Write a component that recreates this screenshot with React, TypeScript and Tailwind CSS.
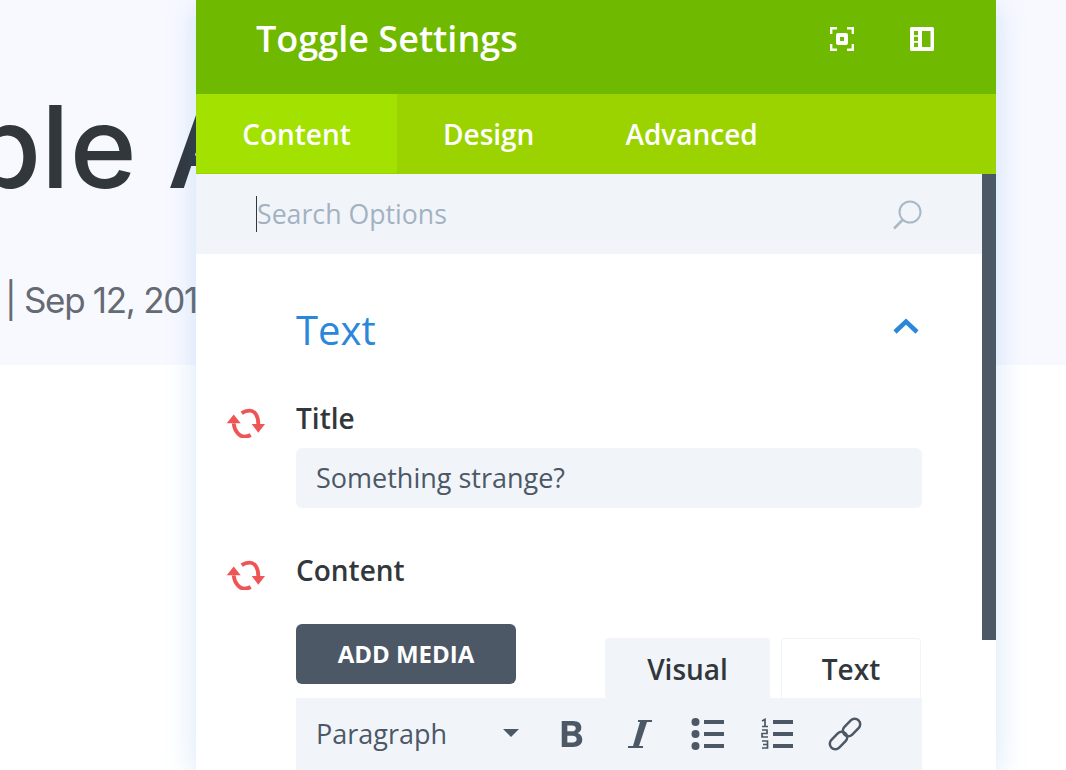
import React from "react";

const Sync = () => (
  <svg width="40" height="30" viewBox="0 0 40 30" fill="none" className="shrink-0">
    <path d="M7.7 15.3C8.5 24 14 28.7 18.3 28.7C20.5 28.7 23 28 24.7 27" stroke="#ef5555" strokeWidth="3.8" />
    <path d="M15.7 5.3C18 3.5 21 2.7 24 2.7C28 2.7 32.3 7 32.3 16" stroke="#ef5555" strokeWidth="3.8" />
    <path d="M0.7 15.3H14.7L7.7 6.5Z" fill="#ef5555" />
    <path d="M25.7 16H39L32.3 24.7Z" fill="#ef5555" />
  </svg>
);

export default function App() {
  return (
    <div className="relative h-[770px] w-full overflow-hidden bg-white font-['Open_Sans',sans-serif]">
      <div className="h-[365px] overflow-hidden bg-[#f8f9ff] pt-[82px] font-['Inter',sans-serif]">
        <div className="ml-[-269px] whitespace-nowrap text-[114px] font-medium leading-[130px] text-[#32373c]">Sample Article</div>
        <div className="ml-[5px] mt-[66px] whitespace-nowrap text-[35px] leading-[44px] tracking-[-1.3px] text-[#666a72]">| Sep 12, 2018</div>
      </div>

      <div className="absolute left-[196px] top-0 h-[770px] w-[800px] bg-white shadow-[0_5px_30px_rgba(43,135,218,0.2)]">
        <div className="flex h-[94px] items-center justify-between bg-[#6fb900] pb-[16px] pl-[60px] pr-[62px]">
          <div className="text-[36px] font-semibold text-white">Toggle Settings</div>
          <div className="flex items-center gap-[56px]">
            <svg width="24" height="24" viewBox="0 0 24 24" fill="none">
              <path d="M1.2 7V1.200H7M17 1.200H22.800V7M22.800 17V22.800H17M7 22.800H1.200V17" stroke="#fff" strokeWidth="2.400" />
              <rect x="6" y="6" width="12" height="12" rx="2" fill="#fff" />
              <rect x="10" y="10" width="4" height="4" fill="#6fb900" />
            </svg>
            <svg width="24" height="24" viewBox="0 0 24 24">
              <path fillRule="evenodd" clipRule="evenodd" d="M1.5 0H22.5A1.5 1.5 0 0 1 24 1.5V22.5A1.5 1.5 0 0 1 22.5 24H1.5A1.5 1.5 0 0 1 0 22.5V1.5A1.5 1.5 0 0 1 1.5 0ZM12 4V20H20.500V4ZM4 4V8.300H8V4ZM4 9.800V14H8V9.800ZM4 15.700V20H8V15.700Z" fill="#fff" />
            </svg>
          </div>
        </div>

        <div className="flex h-[80px] items-center bg-[#9bd300] pb-[1px] text-[28px] font-semibold text-white">
          <div className="flex h-full w-[201px] items-center justify-center bg-[#a2e100]">Content</div>
          <div className="ml-[46px]">Design</div>
          <div className="ml-[91px]">Advanced</div>
        </div>

        <div className="flex h-[80px] items-center justify-between bg-[#f1f5f9] pl-[60px] pr-[74px]">
          <div className="border-l border-[#32373c] text-[26.7px] leading-[36px] text-[#a3b2c2]">Search Options</div>
          <svg width="30" height="30" viewBox="0 0 30 30" fill="none" className="mt-[2px]">
            <circle cx="18" cy="12" r="10.500" stroke="#a9b8c6" strokeWidth="2" />
            <path d="M10.500 20L2 28.500" stroke="#a9b8c6" strokeWidth="2.500" />
          </svg>
        </div>

        <div className="pl-[30px] pr-[74px]">
          <div className="flex h-[146px] items-start justify-between pl-[70px]">
            <div className="pt-[52px] text-[40px] leading-[48px] text-[#2b87da]">Text</div>
            <svg width="26" height="16" viewBox="0 0 26 16" fill="none" className="mt-[64px] mr-[3px]">
              <path d="M2 14L13 3.500L24 14" stroke="#2b87da" strokeWidth="4.500" />
            </svg>
          </div>

          <div className="flex">
            <div className="w-[70px] pt-[8px]"><Sync /></div>
            <div className="flex-1">
              <div className="text-[28px] font-semibold leading-[36px] text-[#32373c]">Title</div>
              <div className="mt-[12px] flex h-[60px] items-center rounded-[6px] bg-[#f1f5f9] px-[20px] pt-[1px] text-[27px] text-[#4c5866]">Something strange?</div>
            </div>
          </div>

          <div className="mt-[44px] flex">
            <div className="w-[70px] pt-[8px]"><Sync /></div>
            <div className="flex-1">
              <div className="text-[28px] font-semibold leading-[36px] text-[#32373c]">Content</div>
              <div className="mt-[36px] flex items-end justify-between">
                <div className="mb-[14px] flex h-[60px] w-[220px] items-center justify-center rounded-[6px] bg-[#4c5866] text-[24px] font-bold text-white">ADD MEDIA</div>
                <div className="flex gap-[11px] pr-[1px]">
                  <div className="flex h-[60px] w-[165px] items-center justify-center rounded-t-[4px] bg-[#f1f5f9] pt-[2px] text-[28px] font-semibold text-[#32373c]">Visual</div>
                  <div className="flex h-[60px] w-[140px] items-center justify-center rounded-t-[4px] border-x border-t border-[#f1f5f9] pt-[1px] text-[28px] font-semibold text-[#32373c]">Text</div>
                </div>
              </div>
              <div className="flex h-[72px] items-center bg-[#f1f5f9] pl-[20px] text-[#4c5866]">
                <span className="w-[187px] text-[27px]">Paragraph</span>
                <svg width="16" height="8" viewBox="0 0 16 8" className="mb-[2px] mr-[42px]"><path d="M0 0H16L8 8Z" fill="#4c5866" /></svg>
                <svg width="22" height="28" viewBox="0 0 22 30" className="mr-[45px]"><path fillRule="evenodd" d="M0 1H12C18 1 21 4 21 8C21 11 19.500 13 17 14C20 15 22 17.500 22 21C22 26 18 29 12 29H0ZM6 6V12H11C13.500 12 15 11 15 9C15 7 13.500 6 11 6ZM6 17V24H11.500C14.500 24 16 22.500 16 20.500C16 18.500 14.500 17 11.500 17Z" fill="#4c5866" /></svg>
                <svg width="24" height="28" viewBox="0 0 24 28" className="mr-[39px]"><path d="M10 0H24V2H19L11 26H15V28H0V26H5L12 2H10Z" fill="#4c5866" /></svg>
                <svg width="33" height="32" viewBox="0 0 33 32" className="mr-[36px]" fill="#4c5866">
                  <circle cx="4.500" cy="4" r="4" /><circle cx="4.500" cy="16" r="4" /><circle cx="4.500" cy="28" r="4" />
                  <rect x="13" y="2" width="20" height="4" /><rect x="13" y="14" width="20" height="4" /><rect x="13" y="26" width="20" height="4" />
                </svg>
                <svg width="33" height="32" viewBox="0 0 33 32" className="mr-[35px]" fill="none" stroke="#4c5866" strokeWidth="1.700">
                  <path d="M2 3L5 1.500V8.500M2 8.500H8M2 12H7V15.500H2V19H8M2 23H7.500V26.500H3M7.500 26.500V30H2" />
                  <path d="M13 4H33M13 16H33M13 28H33" strokeWidth="4" />
                </svg>
                <svg width="34" height="34" viewBox="0 0 34 34" fill="none" stroke="#4c5866" strokeWidth="2.500">
                  <rect x="13.500" y="5" width="20" height="11" rx="5.500" transform="rotate(-45 23.500 10.500)" />
                  <rect x="0.500" y="18" width="20" height="11" rx="5.500" transform="rotate(-45 10.500 23.500)" />
                </svg>
              </div>
            </div>
          </div>
        </div>

        <div className="absolute right-0 top-[174px] h-[466px] w-[14px] bg-[#4c5866]" />
      </div>
    </div>
  );
}
